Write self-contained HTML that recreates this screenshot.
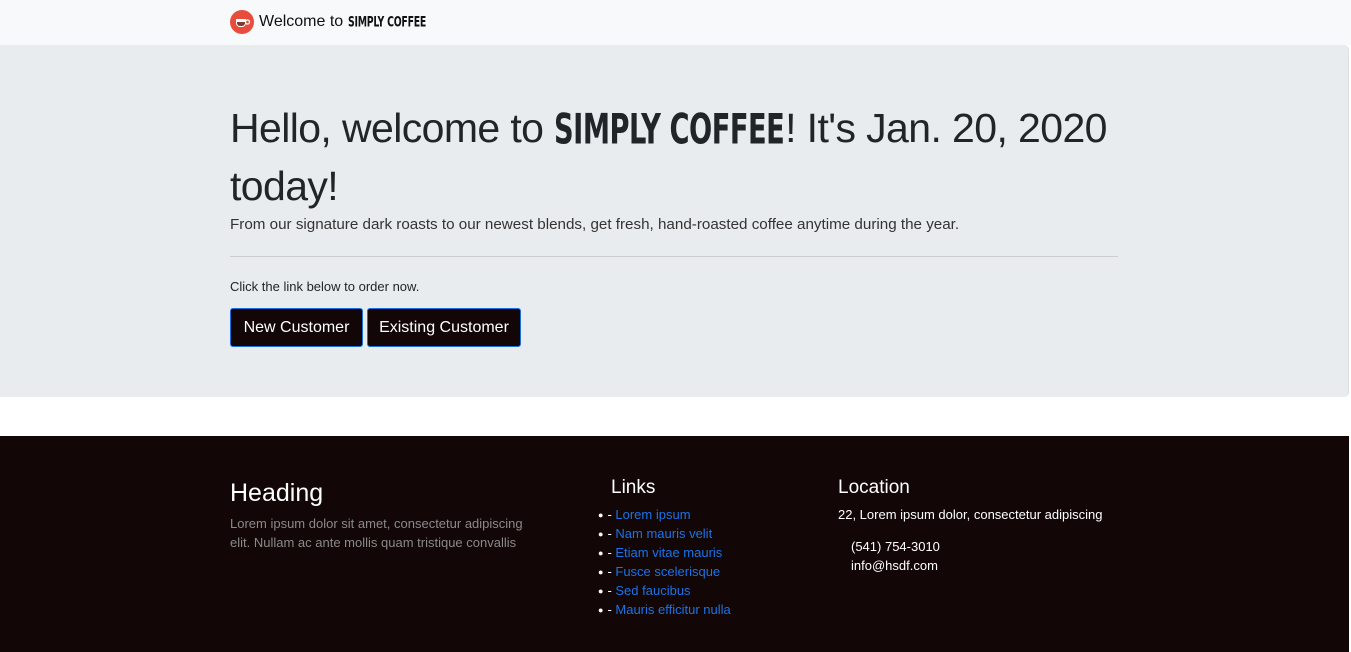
<!DOCTYPE html>
<html><head><style>
body{margin:0;width:1351px;height:652px;overflow:hidden;background:#fff;font-family:"Liberation Sans",sans-serif;color:#212529;position:relative}
.nav{position:absolute;left:0;top:0;width:1351px;height:45px;background:#f8f9fa}
.logo{position:absolute;left:230px;top:10px;width:24px;height:24px;border-radius:50%;background:#e84c3d}
.brand{position:absolute;left:259px;top:13px;font-size:16px;color:#111;white-space:nowrap}
.sc{font-family:"DejaVu Sans Condensed","Liberation Sans Narrow",sans-serif;font-weight:bold;display:inline-block;transform-origin:left center}
.jumbo{position:absolute;left:0;top:45px;width:1348px;height:352px;background:#e9ecef;border-radius:0 5px 5px 0;border-right:1px solid #ddd}
h1{position:absolute;left:230px;top:100px;margin:0;font-size:41px;font-weight:300;line-height:56px;color:#212529;white-space:nowrap;letter-spacing:-0.6px}
.lead{position:absolute;left:230px;top:216px;font-size:15.2px;color:#333;white-space:nowrap}
.hr{position:absolute;left:230px;top:256px;width:888px;height:1px;background:#ccc}
.click{position:absolute;left:230px;top:279px;font-size:13px}
.btn{position:absolute;top:308px;height:37px;background:#120606;color:#fff;border:1px solid #1b6fe0;border-radius:3px;font-size:16px;line-height:38px;text-align:center}
.foot{position:absolute;left:0;top:436px;width:1349px;height:216px;background:#120606;color:#fff}
.fh{position:absolute;font-size:19px;color:#fff}
.fl{position:absolute;left:598px;top:505px;font-size:13px;margin:0;padding:0;list-style:none;color:#fff}
.fl li{height:19px;line-height:19px}
.fl li::before{content:"●";font-size:9px;vertical-align:1px;margin-right:4px}
a{color:#1a73e8;text-decoration:none}
</style></head><body>
<div class="nav"></div>
<div class="logo"><svg width="24" height="24"><path d="M6 9h10v4a4 4 0 0 1-4 4h-2a4 4 0 0 1-4-4z" fill="#fff"/><path d="M7 12h8v1a3 3 0 0 1-3 3h-2a3 3 0 0 1-3-3z" fill="#7a3b2e"/><circle cx="17.5" cy="12" r="2" fill="none" stroke="#fff" stroke-width="1.3"/></svg></div>
<div class="brand">Welcome to <span class="sc" style="font-size:13px;transform:scaleX(0.8) scaleY(1.1);letter-spacing:-0.3px">SIMPLY COFFEE</span></div>
<div class="jumbo"></div>
<h1>Hello, welcome to <span class="sc" style="font-size:37px;transform:scaleX(0.82) scaleY(1.14);margin-right:-50px">SIMPLY COFFEE</span>! It's Jan. 20, 2020<br>today!</h1>
<div class="lead">From our signature dark roasts to our newest blends, get fresh, hand-roasted coffee anytime during the year.</div>
<div class="hr"></div>
<div class="click">Click the link below to order now.</div>
<div class="btn" style="left:230px;width:131px">New Customer</div>
<div class="btn" style="left:367px;width:152px">Existing Customer</div>
<div class="foot"></div>
<div class="fh" style="left:230px;top:479px;font-size:25px">Heading</div>
<div style="position:absolute;left:230px;top:514px;width:310px;font-size:13px;line-height:19px;color:#8a8a8a">Lorem ipsum dolor sit amet, consectetur adipiscing elit. Nullam ac ante mollis quam tristique convallis</div>
<div class="fh" style="left:611px;top:477px">Links</div>
<ul class="fl">
<li>- <a>Lorem ipsum</a></li><li>- <a>Nam mauris velit</a></li><li>- <a>Etiam vitae mauris</a></li><li>- <a>Fusce scelerisque</a></li><li>- <a>Sed faucibus</a></li><li>- <a>Mauris efficitur nulla</a></li>
</ul>
<div class="fh" style="left:838px;top:477px">Location</div>
<div style="position:absolute;left:838px;top:507px;font-size:13px;color:#fff">22, Lorem ipsum dolor, consectetur adipiscing</div>
<div style="position:absolute;left:851px;top:537px;font-size:13px;line-height:19px;color:#fff">(541) 754-3010<br>info@hsdf.com</div>
</body></html>
